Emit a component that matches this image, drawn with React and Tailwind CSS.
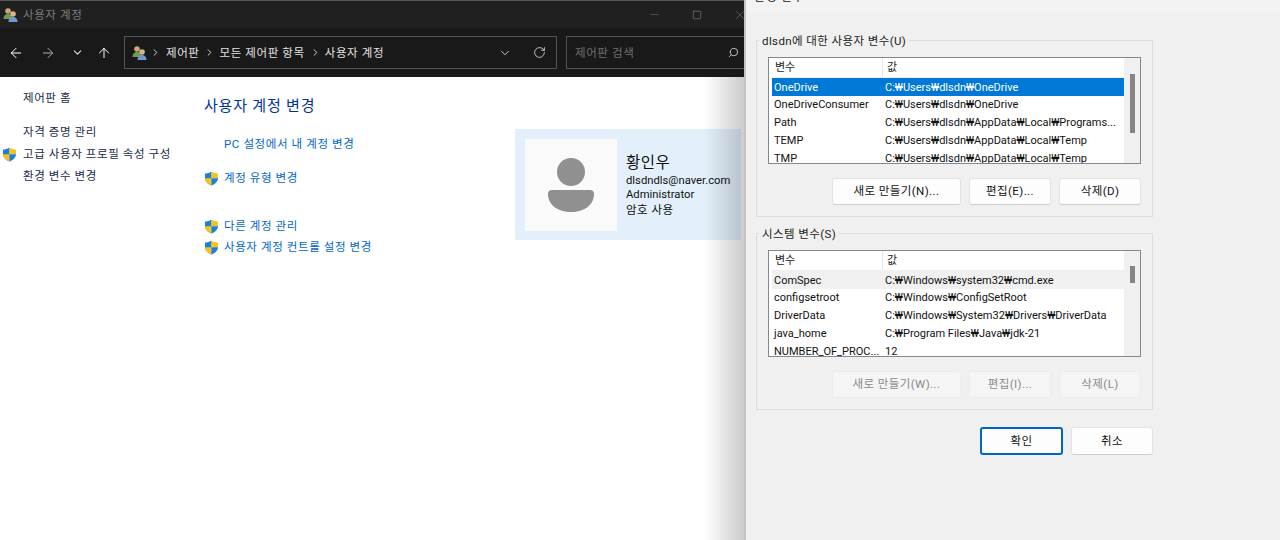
import { ArrowLeft, ArrowRight, ArrowUp, ChevronDown, ChevronRight, RotateCw, Search, Minus, Square, X } from 'lucide-react';

const FONT = "font-['Roboto','Noto_Sans_CJK_KR',sans-serif]";

const USER_VARS = [
  ['OneDrive', 'C:₩Users₩dlsdn₩OneDrive'],
  ['OneDriveConsumer', 'C:₩Users₩dlsdn₩OneDrive'],
  ['Path', 'C:₩Users₩dlsdn₩AppData₩Local₩Programs...'],
  ['TEMP', 'C:₩Users₩dlsdn₩AppData₩Local₩Temp'],
  ['TMP', 'C:₩Users₩dlsdn₩AppData₩Local₩Temp'],
];

const SYSTEM_VARS = [
  ['ComSpec', 'C:₩Windows₩system32₩cmd.exe'],
  ['configsetroot', 'C:₩Windows₩ConfigSetRoot'],
  ['DriverData', 'C:₩Windows₩System32₩Drivers₩DriverData'],
  ['java_home', 'C:₩Program Files₩Java₩jdk-21'],
  ['NUMBER_OF_PROC...', '12'],
];

function Shield() {
  return (
    <svg width="15" height="15" viewBox="0 0 15 15" className="shrink-0">
      <path d="M7.5 0.5 C5.5 2 3 2.6 1 2.6 V7 C1 10.5 4 13 7.5 14.5 Z" fill="#1f7fd6" />
      <path d="M7.5 0.5 C9.5 2 12 2.6 14 2.6 V7.2 H7.5 Z" fill="#f6c21c" />
      <path d="M1 7.2 H7.5 V14.5 C4 13 1 10.5 1 7.2 Z" fill="#f6c21c" />
      <path d="M7.5 7.2 H14 C14 10.5 11 13 7.5 14.5 Z" fill="#1f7fd6" />
    </svg>
  );
}

function UsersIcon() {
  return (
    <svg width="16" height="16" viewBox="0 0 16 16" className="shrink-0">
      <circle cx="5" cy="4" r="2.8" fill="#c9a77a" />
      <path d="M0.5 12 C0.5 8.5 2.5 7 5 7 C7.5 7 9 8.5 9 12 Z" fill="#6d9c52" />
      <circle cx="10" cy="7" r="2.8" fill="#d8b48a" />
      <path d="M5.5 15 C5.5 11.5 7.5 10 10 10 C12.5 10 14.5 11.5 14.5 15 Z" fill="#6c9bd2" />
    </svg>
  );
}

function SideLink({ shield, children }) {
  return (
    <div className="flex items-center h-[22px]">
      <div className="w-[23px] flex justify-start pl-[2px]">{shield && <Shield />}</div>
      <span className="pt-[2px] text-[11.5px] tracking-[0.6px] text-[#1b2a4a]">{children}</span>
    </div>
  );
}

function TaskLink({ shield, children }) {
  return (
    <div className="flex items-center h-[22px]">
      <div className="w-[20px]">{shield && <Shield />}</div>
      <span className="pt-[2px] text-[11.5px] tracking-[0.6px] text-[#0066cc]">{children}</span>
    </div>
  );
}

function VarList({ rows, selected, soft, thumbTop, thumbHeight }) {
  return (
    <div className="h-[107px] mx-[11px] border border-[#828790] bg-white flex overflow-hidden">
      <div className="flex-1 min-w-0 pl-[3px]">
        <div className="flex h-[20px] items-center text-[11px] text-[#222] border-b border-[#f0f0f0]">
          <div className="w-[111px] pl-[3px] pt-[2px] border-r border-[#e5e5e5] h-full flex items-center">변수</div>
          <div className="pl-[4px] pt-[2px]">값</div>
        </div>
        {rows.map((r, i) => (
          <div
            key={r[0]}
            className={`flex h-[17.75px] items-center text-[11px] whitespace-nowrap ${
              selected && i === 0 ? 'bg-[#0078d7] text-white' : soft && i === 0 ? 'bg-[#f0f0f0] text-[#111]' : 'text-[#111]'
            }`}
          >
            <div className="w-[113px] pl-[2px] pt-[2px] overflow-hidden">{r[0]}</div>
            <div className="pt-[2px]">{r[1]}</div>
          </div>
        ))}
      </div>
      <div className="w-[16px] bg-[#f0f0f0] flex justify-center">
        <div className={`w-[5px] bg-[#858585] ${thumbTop} ${thumbHeight}`} />
      </div>
    </div>
  );
}

function DlgButton({ w, disabled, primary, tall, children }) {
  return (
    <button
      className={`${w} ${tall ? 'h-[28px]' : 'h-[27px]'} pt-[1px] rounded-[3px] text-[11.5px] tracking-[0.4px] ${
        primary ? 'border-2 border-[#0067c0] bg-[#fdfdfd] text-[#111]' :
        disabled ? 'bg-[#f5f5f5] border border-[#ececec] text-[#8a8a8a]' : 'bg-[#fdfdfd] border border-[#e3e3e3] border-b-[#cfcfcf] text-[#111]'
      }`}
    >
      {children}
    </button>
  );
}

function VarGroup({ title, rows, selected, soft, disabled, thumbTop, thumbHeight, labels }) {
  return (
    <div className="relative w-[397px] h-[177px] border border-[#dcdcdc] pt-[16px]">
      <div className="absolute left-[2px] top-[-8px] bg-[#f0f0f0] px-[3px] text-[11.5px] tracking-[0.4px] text-[#222]">{title}</div>
      <VarList rows={rows} selected={selected} soft={soft} thumbTop={thumbTop} thumbHeight={thumbHeight} />
      <div className="flex justify-end gap-[8px] pr-[11px] mt-[14px]">
        <DlgButton w="w-[129px]" disabled={disabled}>{labels[0]}</DlgButton>
        <DlgButton w="w-[82px]" disabled={disabled}>{labels[1]}</DlgButton>
        <DlgButton w="w-[82px]" disabled={disabled}>{labels[2]}</DlgButton>
      </div>
    </div>
  );
}

function ControlPanel() {
  return (
    <div className="relative w-[744px] h-full bg-white flex flex-col overflow-hidden">
      <div className="h-[28px] bg-[#202020] border-t border-[#555] flex items-center pl-[3px] text-[#7e7e7e]">
        <UsersIcon />
        <span className="ml-[4px] pt-[2px] text-[11.5px] tracking-[0.6px]">사용자 계정</span>
        <div className="ml-auto -mr-[3px] flex items-center gap-[31px]">
          <Minus size={13} strokeWidth={1} className="text-[#777]" />
          <Square size={10} strokeWidth={1.2} className="text-[#999]" />
          <X size={14} strokeWidth={1} className="text-[#777]" />
        </div>
      </div>
      <div className="h-[49px] bg-[#191919] flex items-center pl-[8px]">
        <ArrowLeft size={16} strokeWidth={1.5} className="text-white" />
        <ArrowRight size={16} strokeWidth={1.5} className="ml-[16px] text-[#aaa]" />
        <ChevronDown size={13} strokeWidth={2} className="ml-[15px] text-[#ddd]" />
        <ArrowUp size={16} strokeWidth={1.5} className="ml-[12px] text-white" />
        <div className="ml-[12px] w-[433px] h-[33px] border border-[#545454] flex items-center pl-[7px] text-[#e2e2e2] text-[11.5px] tracking-[0.6px]">
          <UsersIcon />
          <ChevronRight size={11} strokeWidth={2} className="ml-[2px]" />
          <span className="ml-[5px] pt-[2px]">제어판</span>
          <ChevronRight size={11} strokeWidth={2} className="ml-[4px]" />
          <span className="ml-[5px] pt-[2px]">모든 제어판 항목</span>
          <ChevronRight size={11} strokeWidth={2} className="ml-[5px]" />
          <span className="ml-[4px] pt-[2px]">사용자 계정</span>
          <ChevronDown size={14} strokeWidth={1.5} className="ml-auto mr-[21px]" />
          <RotateCw size={13} strokeWidth={1.5} className="mr-[10px]" />
        </div>
        <div className="ml-[9px] flex-1 h-[33px] border border-[#545454] border-r-0 flex items-center pl-[8px] text-[#6f6f6f] text-[11.5px] tracking-[0.6px]">
          <span className="pt-[2px]">제어판 검색</span>
          <Search size={11} strokeWidth={2} className="ml-auto mr-[5px] text-[#ccc] -scale-x-100" />
        </div>
      </div>
      <div className="flex flex-1 min-h-0">
        <div className="w-[204px] pt-[10px]">
          <SideLink>제어판 홈</SideLink>
          <div className="h-[12px]" />
          <SideLink>자격 증명 관리</SideLink>
          <SideLink shield>고급 사용자 프로필 속성 구성</SideLink>
          <SideLink>환경 변수 변경</SideLink>
        </div>
        <div className="w-[311px] pt-[17px]">
          <div className="text-[15px] leading-[24px] tracking-[0.8px] text-[#003399]">사용자 계정 변경</div>
          <div className="mt-[15px]"><TaskLink>PC 설정에서 내 계정 변경</TaskLink></div>
          <div className="mt-[12px]"><TaskLink shield>계정 유형 변경</TaskLink></div>
          <div className="mt-[26px]"><TaskLink shield>다른 계정 관리</TaskLink></div>
          <div className="-mt-[1px]"><TaskLink shield>사용자 계정 컨트롤 설정 변경</TaskLink></div>
        </div>
        <div className="pt-[52px]">
          <div className="w-[226px] h-[111px] bg-[#e3f0fb] flex items-center pl-[10px]">
            <div className="w-[92px] h-[92px] bg-[#fafafa] flex items-center justify-center">
              <svg width="46" height="54" viewBox="0 0 46 54">
                <circle cx="23" cy="14" r="14" fill="#909090" />
                <path d="M4 32 H42 Q46 32 46 36 C46 47 36 54 23 54 C10 54 0 47 0 36 Q0 32 4 32 Z" fill="#909090" />
              </svg>
            </div>
            <div className="ml-[9px] text-[#111]">
              <div className="text-[15.5px] leading-[22px] tracking-[0.5px]">황인우</div>
              <div className="text-[11.25px] leading-[14.5px]">dlsdndls@naver.com</div>
              <div className="text-[11.25px] leading-[14.5px]">Administrator</div>
              <div className="text-[11.5px] leading-[14.5px] tracking-[0.5px]">암호 사용</div>
            </div>
          </div>
        </div>
      </div>
      <div className="absolute top-[76px] bottom-0 right-0 w-[40px] bg-gradient-to-r from-transparent to-black/20" />
    </div>
  );
}

function EnvDialog() {
  return (
    <div className="flex-1 h-full bg-[#f0f0f0] border-l-2 border-[#c4c4c4] overflow-hidden">
      <div className="h-[12px] bg-[#f3f3f3] pl-[8px] overflow-hidden">
        <div className="-mt-[12px] text-[12px] leading-[18px] tracking-[0.6px] text-[#222]">환경 변수</div>
      </div>
      <div className="pl-[11px] pt-[28px] -ml-[1px] flex flex-col w-[420px]">
        <VarGroup
          title="dlsdn에 대한 사용자 변수(U)"
          rows={USER_VARS}
          selected
          thumbTop="mt-[16px]"
          thumbHeight="h-[59px]"
          labels={['새로 만들기(N)...', '편집(E)...', '삭제(D)']}
        />
        <div className="mt-[16px]">
          <VarGroup
            title="시스템 변수(S)"
            rows={SYSTEM_VARS}
            soft
            disabled
            thumbTop="mt-[15px]"
            thumbHeight="h-[17px]"
            labels={['새로 만들기(W)...', '편집(I)...', '삭제(L)']}
          />
        </div>
        <div className="w-[397px] mt-[17px] flex justify-end gap-[8px]">
          <DlgButton w="w-[83px]" primary tall>확인</DlgButton>
          <DlgButton w="w-[82px]" tall>취소</DlgButton>
        </div>
      </div>
    </div>
  );
}

export default function App() {
  return (
    <div className={`w-[1280px] h-[540px] flex overflow-hidden ${FONT}`}>
      <ControlPanel />
      <EnvDialog />
    </div>
  );
}
